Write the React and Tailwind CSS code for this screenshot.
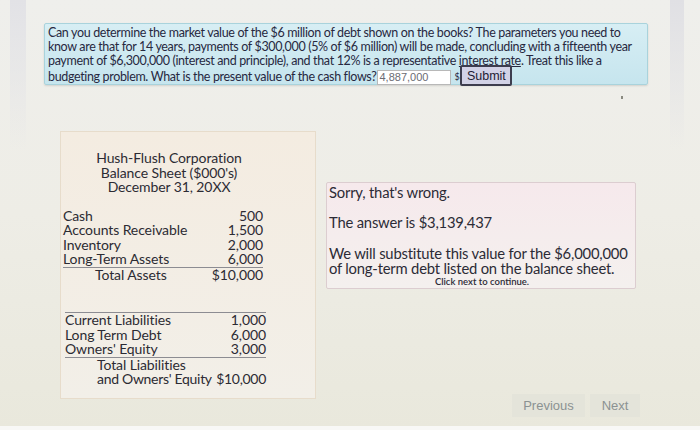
const font = { fontFamily: 'Lato, "Open Sans", sans-serif' };

const assets = [
  ['Cash', '500'],
  ['Accounts Receivable', '1,500'],
  ['Inventory', '2,000'],
  ['Long-Term Assets', '6,000'],
];

const liabilities = [
  ['Current Liabilities', '1,000'],
  ['Long Term Debt', '6,000'],
  ["Owners' Equity", '3,000'],
];

function Question() {
  return (
    <div className="ml-[44px] w-[604px] h-[62px] rounded-[2px] border border-[#a9d3dc] bg-gradient-to-b from-[#d7eef4] to-[#c6e5ee] pl-[3px] pt-[2px] text-[12.5px] leading-[14px] tracking-[-0.35px] text-[#27283f] shadow-[0_1px_2px_rgba(0,0,0,0.12)]">
      <div className="whitespace-nowrap">Can you determine the market value of the $6 million of debt shown on the books? The parameters you need to</div>
      <div className="whitespace-nowrap">know are that for 14 years, payments of $300,000 (5% of $6 million) will be made, concluding with a fifteenth year</div>
      <div className="whitespace-nowrap">
        payment of $6,300,000 (interest and principle), and that 12% is a representative{' '}
        <span className="underline">interest rate</span>. Treat this like a
      </div>
      <div className="flex items-center whitespace-nowrap">
        <span>budgeting problem. What is the present value of the cash flows?</span>
        <span className="ml-[1px] flex h-[15px] w-[74px] items-center border border-[#b8b8b8] bg-white pl-[1px] text-[11px] tracking-normal text-[#6b6b73]" style={{ fontFamily: '"Liberation Sans", sans-serif' }}>
          4,887,000
        </span>
        <span className="ml-[3px] mr-[1px] text-[9px]">$</span>
        <span className="-mt-[3px] flex h-[21px] w-[52px] items-center justify-center rounded-[2px] border-2 border-[#3d3d4e] bg-[#d2d2e6] text-[12.5px] tracking-normal text-[#1f2033]" style={{ fontFamily: '"Liberation Sans", sans-serif' }}>
          Submit
        </span>
      </div>
    </div>
  );
}

function Row({ label, value, indent }) {
  return (
    <div className="flex justify-between whitespace-nowrap">
      <span className={indent ? 'pl-[32px]' : ''}>{label}</span>
      <span>{value}</span>
    </div>
  );
}

function BalanceSheet() {
  return (
    <div className="ml-[60px] h-[268px] w-[256px] border border-[#e7dccb] bg-gradient-to-b from-[#f4ece1] to-[#f2efe8] text-[14px] leading-[14.5px] tracking-[-0.1px] text-[#2c2b33]">
      <div className="w-[216px] pt-[19px] text-center">
        <div>Hush-Flush Corporation</div>
        <div>Balance Sheet ($000's)</div>
        <div>December 31, 20XX</div>
      </div>
      <div className="ml-[2px] mt-[14px] w-[200px]">
        {assets.map(([l, v]) => (
          <Row key={l} label={l} value={v} />
        ))}
        <div className="border-t border-[#8c8c92]">
          <Row label="Total Assets" value="$10,000" indent />
        </div>
      </div>
      <div className="ml-[4px] mt-[30px] w-[201px] border-t border-[#8c8c92]">
        {liabilities.map(([l, v]) => (
          <Row key={l} label={l} value={v} />
        ))}
        <div className="border-t border-[#8c8c92] pl-[32px]">
          <div className="whitespace-nowrap">Total Liabilities</div>
          <div className="flex justify-between whitespace-nowrap tracking-[-0.3px]">
            <span>and Owners' Equity</span>
            <span>$10,000</span>
          </div>
        </div>
      </div>
    </div>
  );
}

function Feedback() {
  return (
    <div className="mt-[51px] ml-[10px] h-[107px] w-[310px] rounded-[2px] border border-[#dccdd0] bg-gradient-to-b from-[#f6e9ec] to-[#f4f0ee] pl-[2px] pt-[2px] text-[14.8px] leading-[15px] tracking-[-0.2px] text-[#2c2b36]">
      <div>Sorry, that's wrong.</div>
      <div className="mt-[15px]">The answer is $3,139,437</div>
      <div className="mt-[16px] whitespace-nowrap">We will substitute this value for the $6,000,000</div>
      <div className="whitespace-nowrap">of long-term debt listed on the balance sheet.</div>
      <div className="text-center text-[9.5px] leading-[11px] font-semibold tracking-normal">Click next to continue.</div>
    </div>
  );
}

export default function App() {
  return (
    <div
      className="relative h-[430px] w-[700px] overflow-hidden bg-gradient-to-b from-[#efefec] via-[#eeede6] to-[#e9e8dc] pt-[23px]"
      style={font}
    >
      <div className="pointer-events-none absolute left-[10px] top-0 h-[150px] w-[16px] bg-gradient-to-b from-[#e2e2e6] to-transparent" />
      <div className="pointer-events-none absolute left-[670px] top-0 h-[150px] w-[14px] bg-gradient-to-b from-[#e0e0e4] to-transparent" />
      <Question />
      <div className="ml-[621px] mt-[11px] h-[3px] w-[2px] bg-[#8a8a80]" />
      <div className="mt-[32px] flex">
        <BalanceSheet />
        <div className="flex flex-1 flex-col">
          <Feedback />
          <div className="mt-auto mb-[-18px] ml-[196px] flex gap-[5px] text-[13px] text-[#8b9292]" style={{ fontFamily: '"Liberation Sans", sans-serif' }}>
            <div className="flex h-[23px] w-[73px] items-center justify-center bg-[#e4e4da]">Previous</div>
            <div className="flex h-[23px] w-[50px] items-center justify-center bg-[#e4e4da]">Next</div>
          </div>
        </div>
      </div>
      <div className="absolute bottom-0 left-0 h-[4px] w-full bg-[#f8f8f6]" />
    </div>
  );
}
